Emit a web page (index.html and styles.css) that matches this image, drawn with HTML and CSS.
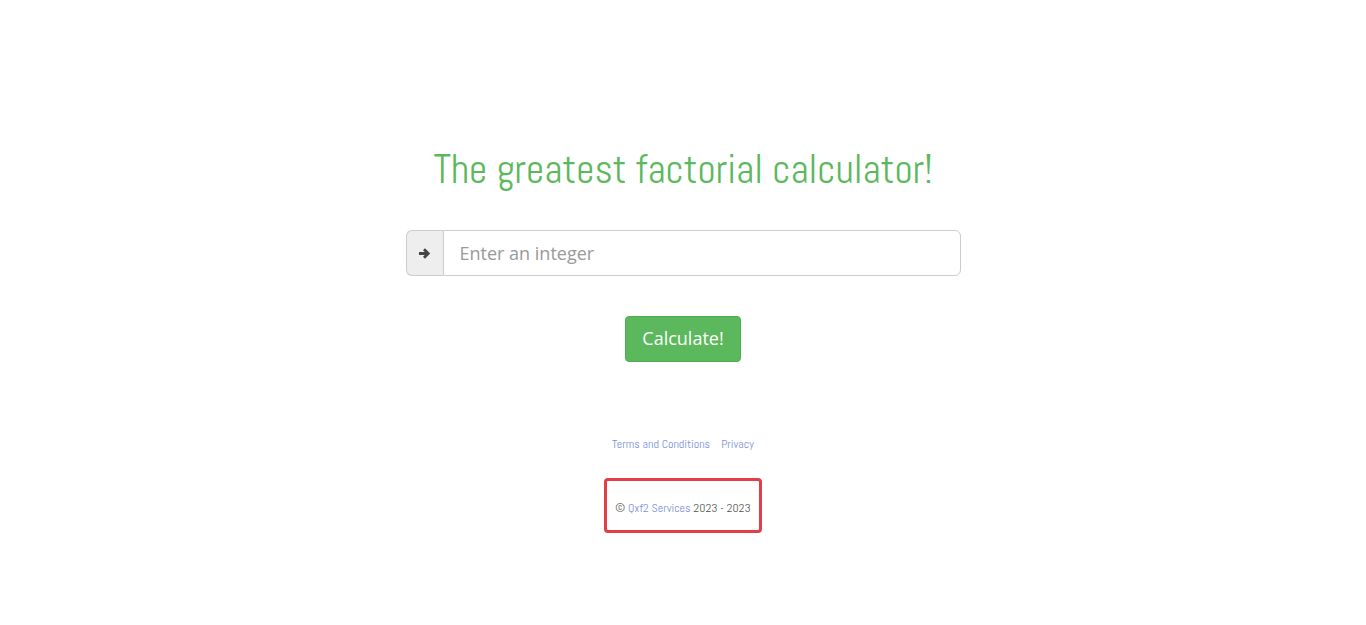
FILE: index.html
```html
<!DOCTYPE html>
<html>
<head>
<meta charset="utf-8">
<title>Factorial</title>
<link rel="stylesheet" href="styles.css">
</head>
<body>
<main class="page">
  <h1 class="title">The greatest factorial calculator!</h1>
  <div class="input-group">
    <span class="addon">
      <svg width="13" height="13" viewBox="0 0 13 13"><path d="M1 6.5h9M6 2.3L10.2 6.5 6 10.7" fill="none" stroke="#444" stroke-width="2.8" stroke-linecap="butt" stroke-linejoin="miter"/></svg>
    </span>
    <input class="field" type="text" placeholder="Enter an integer">
  </div>
  <div class="actions">
    <button class="btn">Calculate!</button>
  </div>
  <nav class="links">
    <a href="#">Terms and Conditions</a>
    <a href="#">Privacy</a>
  </nav>
  <div class="copy-wrap">
    <p class="copy">© <a href="#">Qxf2 Services</a> 2023 - 2023</p>
  </div>
</main>
</body>
</html>
```
FILE: styles.css
```css
html, body {
  margin: 0;
  padding: 0;
  background: #fff;
}
.page {
  display: flex;
  flex-direction: column;
  align-items: center;
  padding-top: 146px;
}
.title {
  margin: 0;
  font-family: "Abel", "DejaVu Sans Condensed", "Roboto", sans-serif;
  font-weight: 300;
  font-size: 40px;
  line-height: 48px;
  color: #5cb85c;
}
.input-group {
  display: flex;
  width: 555px;
  height: 46px;
  margin-top: 36px;
  box-sizing: border-box;
}
.addon {
  width: 37px;
  box-sizing: border-box;
  display: flex;
  align-items: center;
  justify-content: center;
  background: #eee;
  border: 1px solid #ccc;
  border-right: none;
  border-radius: 6px 0 0 6px;
}
.field {
  flex: 1;
  box-sizing: border-box;
  height: 46px;
  border: 1px solid #ccc;
  border-radius: 0 6px 6px 0;
  padding: 0 16px;
  font-family: "Open Sans", sans-serif;
  font-size: 18px;
  color: #555;
  outline: none;
}
.field::placeholder {
  color: #999;
}
.actions {
  margin-top: 40px;
}
.btn {
  height: 46px;
  width: 116px;
  padding: 0 0 2px;
  background: #5cb85c;
  border: 1px solid #4cae4c;
  border-radius: 4px;
  color: #fff;
  font-family: "Open Sans", sans-serif;
  font-size: 18px;
}
.links {
  margin-top: 74px;
  display: flex;
  gap: 11px;
  font-family: "Abel", "DejaVu Sans Condensed", "Roboto", sans-serif;
  font-size: 12px;
  line-height: 16px;
}
.links a, .copy a {
  color: #7a8fd8;
  text-decoration: none;
}
.copy-wrap {
  margin-top: 26px;
  width: 158px;
  height: 55px;
  box-sizing: border-box;
  border: 3px solid #e33e48;
  border-radius: 4px;
  padding-top: 4px;
  display: flex;
  align-items: center;
  justify-content: center;
}
.copy {
  margin: 0;
  font-family: "Abel", "DejaVu Sans Condensed", "Roboto", sans-serif;
  font-size: 12px;
  color: #555;
}
```
